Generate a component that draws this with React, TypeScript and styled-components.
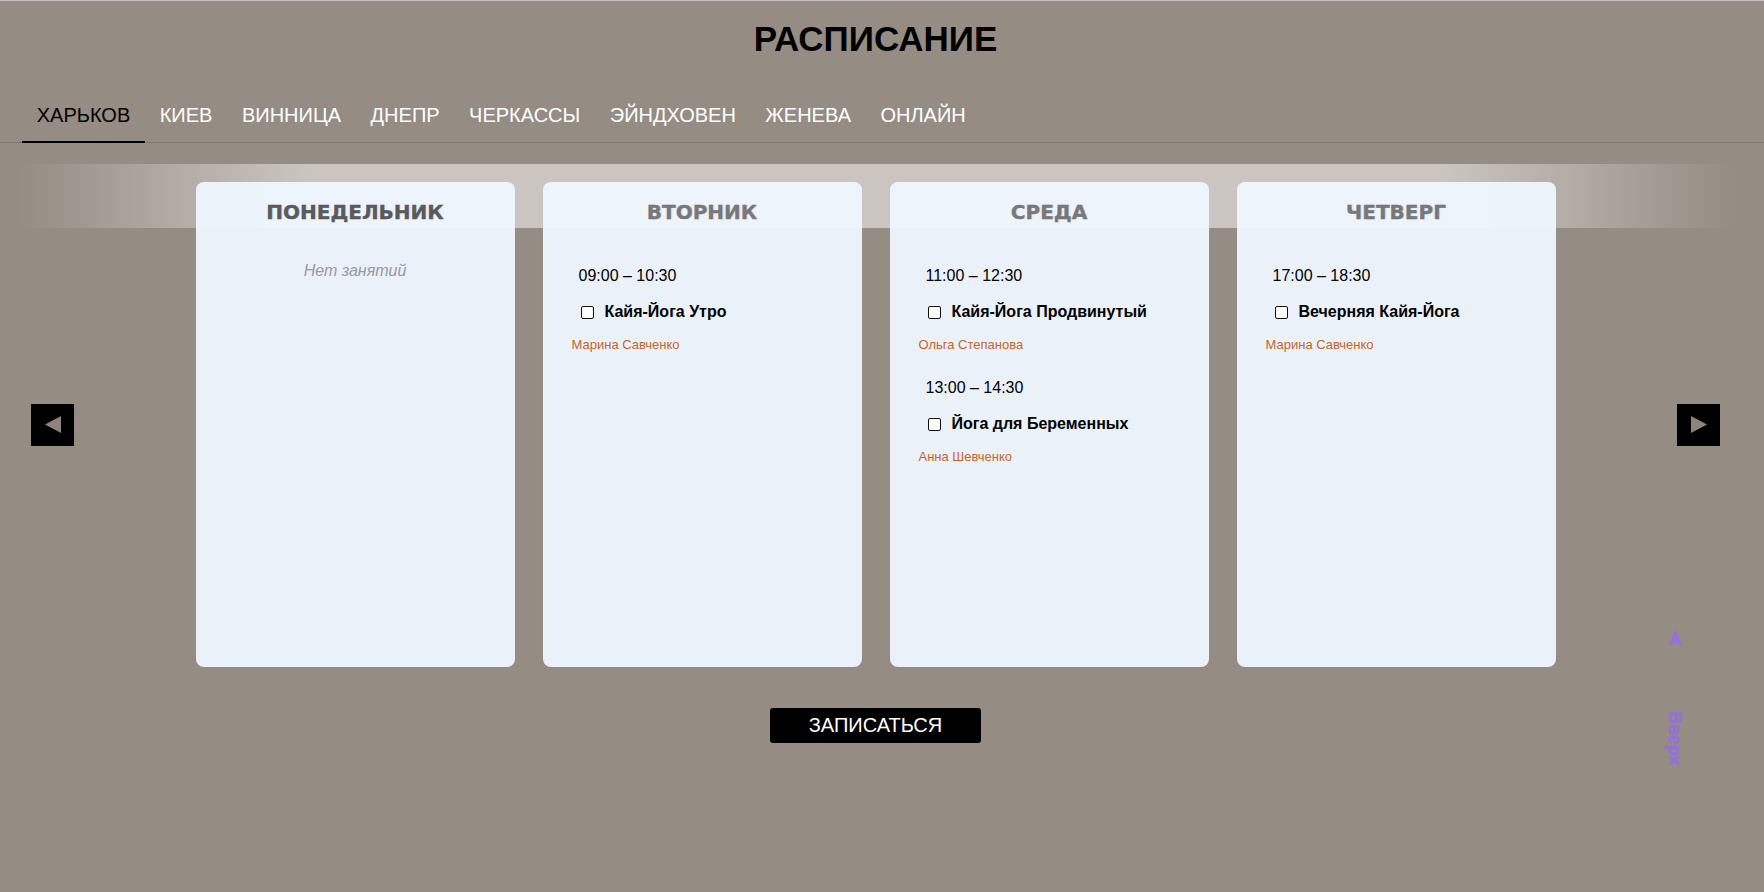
import React from "react";
import styled, { createGlobalStyle } from "styled-components";

const GlobalStyle = createGlobalStyle`
  html, body {
    margin: 0;
    padding: 0;
    background: #958c83;
  }
  body {
    font-family: "Liberation Sans", Arial, sans-serif;
    min-height: 100vh;
  }
  * { box-sizing: border-box; }
`;

const Page = styled.div`
  min-height: 100vh;
  border-top: 1px solid #c4c2c0;
`;

const Title = styled.h1`
  margin: 0 13px 0 0;
  padding-top: 18px;
  text-align: center;
  font-size: 35px;
  line-height: 40px;
  font-weight: 700;
  color: #000;
`;

const TabList = styled.nav`
  display: flex;
  margin-top: 32px;
  padding-left: 22px;
  border-bottom: 1px solid rgba(0, 0, 0, 0.14);
`;

const Tab = styled.button<{ $active?: boolean }>`
  margin: 0 0 -1px;
  padding: 12px 14.75px 14px;
  background: none;
  border: none;
  border-bottom: 2px solid ${(p) => (p.$active ? "#000" : "transparent")};
  font-family: inherit;
  font-size: 20px;
  line-height: 24px;
  color: ${(p) => (p.$active ? "#000" : "#fff")};
  cursor: pointer;
`;

const Main = styled.main`
  margin-right: 13px;
`;

const Carousel = styled.section`
  position: relative;
  margin-top: 21px;
  padding: 18px 31px 0;
  display: flex;
  align-items: center;
  justify-content: space-between;

  &::before {
    content: "";
    position: absolute;
    top: 0;
    left: 16px;
    right: 16px;
    height: 64px;
    background: linear-gradient(
      to right,
      rgba(255, 255, 255, 0) 0%,
      rgba(255, 255, 255, 0.5) 17%,
      rgba(255, 255, 255, 0.5) 83%,
      rgba(255, 255, 255, 0) 100%
    );
  }
`;

const NavButton = styled.button`
  position: relative;
  z-index: 1;
  width: 43px;
  height: 42px;
  padding: 0;
  border: none;
  background: #000;
  display: flex;
  align-items: center;
  justify-content: center;
  cursor: pointer;
`;

const Days = styled.div`
  position: relative;
  z-index: 1;
  display: flex;
  gap: 28px;
`;

const Card = styled.article`
  width: 319px;
  height: 485px;
  border-radius: 8px;
  background: rgba(238, 247, 255, 0.95);
  padding-top: 18px;
`;

const DayTitle = styled.h2<{ $today?: boolean }>`
  margin: 0;
  text-align: center;
  font-family: "DejaVu Sans", "Liberation Sans", sans-serif;
  font-size: 20px;
  line-height: 24px;
  font-weight: 700;
  color: ${(p) => (p.$today ? "#5a5a5a" : "#787878")};
  text-shadow: 1px 0 1px rgba(140, 175, 225, 0.35);
  -webkit-text-stroke: 0.3px currentColor;
`;

const Empty = styled.p`
  margin: 37px 0 0;
  text-align: center;
  font-size: 16px;
  line-height: 20px;
  font-style: italic;
  color: #9a9a9a;
`;

const ClassList = styled.ul`
  list-style: none;
  margin: 0;
  padding: 42px 20px 0 29px;
`;

const ClassItem = styled.li`
  & + & {
    margin-top: 25px;
  }
`;

const Time = styled.div`
  padding-left: 7px;
  font-size: 16px;
  line-height: 20px;
  color: #000;
`;

const ClassRow = styled.label`
  margin-top: 16px;
  padding-left: 9px;
  display: flex;
  align-items: center;
  gap: 11px;
  font-size: 16px;
  line-height: 20px;
  font-weight: 700;
  color: #000;
`;

const Check = styled.input`
  appearance: none;
  margin: 0;
  width: 13px;
  height: 13px;
  border: 1.7px solid #111;
  border-radius: 2px;
  background: #fff;
`;

const Teacher = styled.div`
  margin-top: 15px;
  font-size: 13px;
  line-height: 16px;
  color: #c4662a;
`;

const Actions = styled.div`
  display: flex;
  justify-content: center;
  margin-top: 41px;
`;

const SignUp = styled.button`
  width: 211px;
  height: 35px;
  border: none;
  border-radius: 3px;
  background: #000;
  color: #fff;
  font-family: inherit;
  font-size: 20px;
  cursor: pointer;
`;

const ToTop = styled.a`
  position: fixed;
  top: 629px;
  right: 82px;
  width: 14px;
  display: flex;
  flex-direction: column;
  align-items: center;
  color: #9370db;
  text-decoration: none;
  cursor: pointer;
`;

const ToTopText = styled.span`
  margin-top: 66px;
  writing-mode: vertical-rl;
  font-family: "Liberation Sans", Arial, sans-serif;
  font-size: 18px;
  line-height: 14px;
  font-weight: 700;
  -webkit-text-stroke: 0.6px #9370db;
`;

type Lesson = { time: string; name: string; teacher: string };
type Day = { title: string; today?: boolean; lessons: Lesson[] };

const tabs = ["ХАРЬКОВ", "КИЕВ", "ВИННИЦА", "ДНЕПР", "ЧЕРКАССЫ", "ЭЙНДХОВЕН", "ЖЕНЕВА", "ОНЛАЙН"];

const days: Day[] = [
  { title: "ПОНЕДЕЛЬНИК", today: true, lessons: [] },
  {
    title: "ВТОРНИК",
    lessons: [{ time: "09:00 – 10:30", name: "Кайя-Йога Утро", teacher: "Марина Савченко" }],
  },
  {
    title: "СРЕДА",
    lessons: [
      { time: "11:00 – 12:30", name: "Кайя-Йога Продвинутый", teacher: "Ольга Степанова" },
      { time: "13:00 – 14:30", name: "Йога для Беременных", teacher: "Анна Шевченко" },
    ],
  },
  {
    title: "ЧЕТВЕРГ",
    lessons: [{ time: "17:00 – 18:30", name: "Вечерняя Кайя-Йога", teacher: "Марина Савченко" }],
  },
];

const Triangle = ({ dir }: { dir: "left" | "right" }) => (
  <svg width="16" height="17" viewBox="0 0 16 17" aria-hidden>
    {dir === "left" ? (
      <polygon points="16,0 16,17 0,8.5" fill="#8d857c" />
    ) : (
      <polygon points="0,0 0,17 16,8.5" fill="#8d857c" />
    )}
  </svg>
);

export default function App() {
  return (
    <>
      <GlobalStyle />
      <Page>
        <Title>РАСПИСАНИЕ</Title>
        <TabList>
          {tabs.map((t, i) => (
            <Tab key={t} $active={i === 0}>
              {t}
            </Tab>
          ))}
        </TabList>
        <Main>
          <Carousel>
            <NavButton aria-label="Назад">
              <Triangle dir="left" />
            </NavButton>
            <Days>
              {days.map((d) => (
                <Card key={d.title}>
                  <DayTitle $today={d.today}>{d.title}</DayTitle>
                  {d.lessons.length === 0 ? (
                    <Empty>Нет занятий</Empty>
                  ) : (
                    <ClassList>
                      {d.lessons.map((l) => (
                        <ClassItem key={l.time}>
                          <Time>{l.time}</Time>
                          <ClassRow>
                            <Check type="checkbox" />
                            {l.name}
                          </ClassRow>
                          <Teacher>{l.teacher}</Teacher>
                        </ClassItem>
                      ))}
                    </ClassList>
                  )}
                </Card>
              ))}
            </Days>
            <NavButton aria-label="Вперёд">
              <Triangle dir="right" />
            </NavButton>
          </Carousel>
          <Actions>
            <SignUp>ЗАПИСАТЬСЯ</SignUp>
          </Actions>
        </Main>
        <ToTop>
          <svg width="13" height="16" viewBox="0 0 13 16" aria-hidden>
            <path d="M6.5 0 L13 16 L6.5 14 L0 16 Z" fill="#9370db" />
          </svg>
          <ToTopText>Вверх</ToTopText>
        </ToTop>
      </Page>
    </>
  );
}
